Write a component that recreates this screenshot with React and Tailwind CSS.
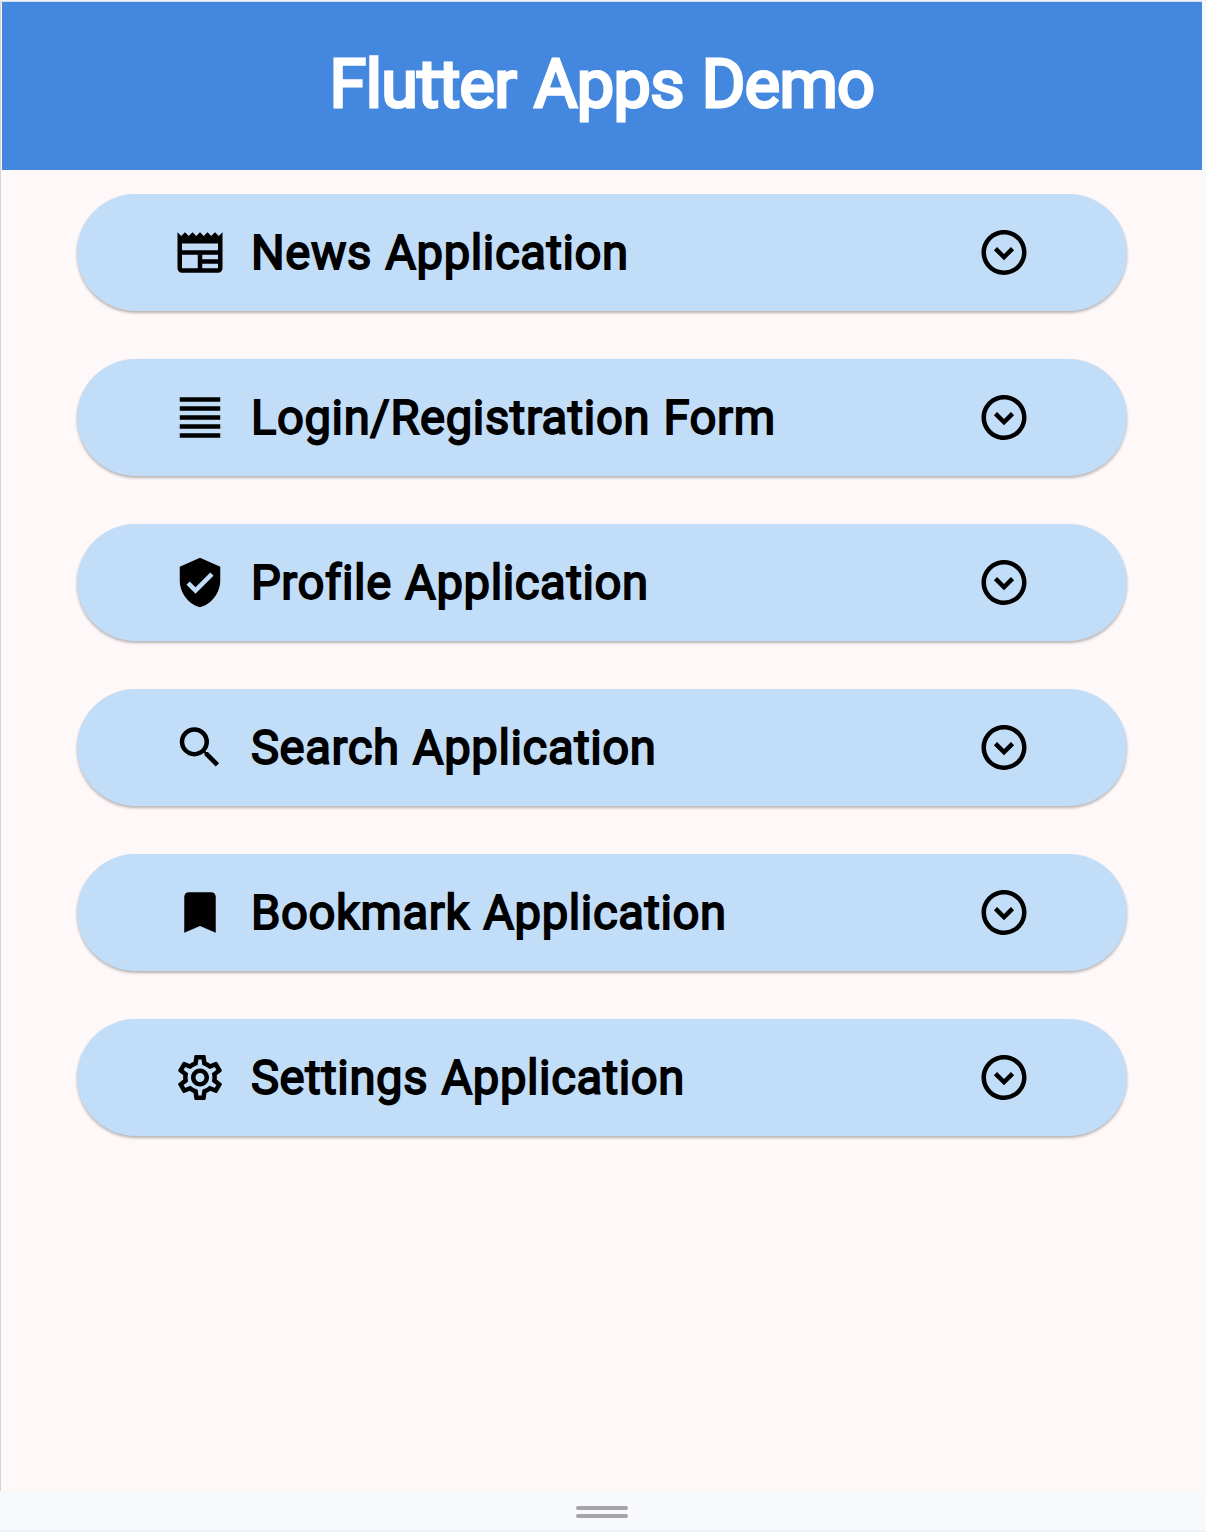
import { MdVerifiedUser, MdSearch, MdBookmark, MdOutlineSettings, MdOutlineExpandCircleDown } from "react-icons/md";

function NewsIcon({ className }) {
  return (
    <svg viewBox="0 0 24 24" fill="currentColor" className={className}>
      <path d="M22 3l-1.67 1.67L18.67 3 17 4.67 15.33 3l-1.66 1.67L12 3l-1.67 1.67L8.67 3 7 4.67 5.33 3 3.67 4.67 2 3v16c0 1.1.9 2 2 2h16c1.1 0 2-.9 2-2V3zM11 19H4v-6h7v6zm9 0h-7v-2h7v2zm0-4h-7v-2h7v2zm0-4H4V8h16v3z" />
    </svg>
  );
}

function LinesIcon({ className }) {
  return (
    <svg viewBox="0 0 24 24" fill="currentColor" className={className}>
      <path d="M3 3h18v2H3zM3 7h18v2H3zM3 11h18v2H3zM3 15h18v2H3zM3 19h18v2H3z" />
    </svg>
  );
}

const items = [
  { label: "News Application", Icon: NewsIcon },
  { label: "Login/Registration Form", Icon: LinesIcon },
  { label: "Profile Application", Icon: MdVerifiedUser },
  { label: "Search Application", Icon: MdSearch },
  { label: "Bookmark Application", Icon: MdBookmark },
  { label: "Settings Application", Icon: MdOutlineSettings },
];

export default function App() {
  return (
    <div className="flex h-[1532px] w-[1206px] flex-col border-b-2 border-t border-b-[#edf2fa] border-t-[#edf2fa] bg-[#f8f9fd] font-['Roboto',sans-serif] text-black">
      <div className="mr-1 flex h-[1490px] flex-col border-l border-t border-l-[#d3d3d6] border-t-[#d8dbe2] bg-[#fef8f8] pl-px">
        <header className="flex h-[168px] shrink-0 items-center justify-center bg-[#4487de] pb-0.5 text-[66.5px] font-normal tracking-[-0.62px] [word-spacing:2px] text-white [-webkit-text-stroke:3px_white]">
          <h1>Flutter Apps Demo</h1>
        </header>
        <main className="flex flex-1 flex-col gap-12 px-[75px] pt-6">
          {items.map(({ label, Icon }) => (
            <button key={label} className="flex h-[117px] items-center rounded-full bg-[#c2ddf8] px-24 shadow-[0_2px_3px_rgba(0,0,0,0.28)]">
              <Icon className="mb-px size-[54px] shrink-0 translate-y-[0.4px]" />
              <span className="ml-6 pt-px text-[47.2px] font-normal tracking-[0.6px] [word-spacing:1px] [-webkit-text-stroke:1.8px_black]">{label}</span>
              <MdOutlineExpandCircleDown className="mb-px ml-auto size-[54px] translate-y-[0.4px]" />
            </button>
          ))}
        </main>
      </div>
      <footer className="flex flex-1 flex-col items-center gap-1 pr-0.5 pt-[15px]">
        <div className="h-1 w-[52px] rounded-sm bg-[#a5a5a5]" />
        <div className="h-1 w-[52px] rounded-sm bg-[#a5a5a5]" />
      </footer>
    </div>
  );
}
